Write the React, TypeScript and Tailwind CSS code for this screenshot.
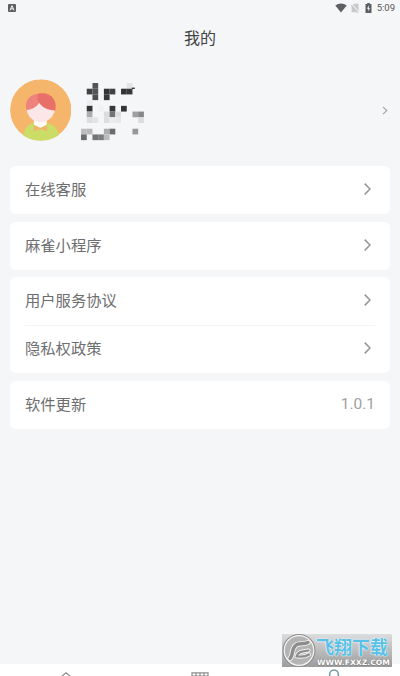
import { Fragment } from "react";

const MENU = [
  [{ label: "在线客服" }],
  [{ label: "麻雀小程序" }],
  [{ label: "用户服务协议" }, { label: "隐私权政策" }],
  [{ label: "软件更新", value: "1.0.1" }],
];

// column, row, colour of each block that hides the user name
const BLOCKS: [number, number, string][] = [
  [2, 0, "#555557"], [8, 0, "#e4e4e6"],
  [1, 1, "#424244"], [2, 1, "#555557"], [4, 1, "#343436"], [5, 1, "#424244"], [7, 1, "#343436"], [8, 1, "#38383a"],
  [2, 2, "#4e4e50"], [4, 2, "#38383a"],
  [1, 3, "#ededef"],
  [1, 4, "#343436"], [3, 4, "#f1f1f3"], [5, 4, "#38383a"], [7, 4, "#343436"],
  [1, 5, "#adadaf"], [4, 5, "#dcdcde"], [5, 5, "#747476"], [6, 5, "#dededf"], [9, 5, "#a0a0a2"], [10, 5, "#878789"],
  [1, 6, "#dededf"], [2, 6, "#e4e4e6"], [4, 6, "#dededf"], [5, 6, "#ececee"], [6, 6, "#e8e8ea"], [10, 6, "#dcdcde"],
  [0, 8, "#bcbcbe"], [1, 8, "#b8b8ba"], [4, 8, "#adadaf"], [5, 8, "#6c6c6e"], [9, 8, "#98989a"],
  [0, 9, "#6c6c6e"], [2, 9, "#747476"], [3, 9, "#7c7c7e"], [4, 9, "#bcbcbe"],
];

const StatusBar = () => (
  <div className="flex h-4 items-center pl-2 pr-[5px]">
    <svg width="8" height="8" viewBox="0 0 8 8">
      <rect width="8" height="8" rx="1" fill="#5d5f62" />
      <path d="M2 6.4 4 1.6 6 6.4M2.8 4.8h2.4" fill="none" stroke="#f5f6f8" strokeWidth="1" />
    </svg>
    <svg className="ml-auto" width="12" height="10" viewBox="0 0 12 10">
      <path d="M0.3 2.6C3.6 -0.3 8.4 -0.3 11.7 2.6L6 9.6Z" fill="#5d5f62" />
    </svg>
    <svg className="ml-1" width="8" height="10" viewBox="0 0 8 10">
      <path d="M3 0.7h4.6v8.6H0.6V3.2Z" fill="#c9cacc" />
      <path d="M0.3 1.3 7.4 9.3" stroke="#f5f6f8" strokeWidth="1.6" />
      <path d="M0.2 1.9 6.9 9.6" stroke="#a9abad" strokeWidth="0.8" />
    </svg>
    <svg className="ml-1.5" width="7" height="10" viewBox="0 0 7 10">
      <path d="M2.2 0h2.6v1H6.5v9h-6V1h1.7Z" fill="#5d5f62" />
      <path d="M3.9 2.2 2 5.8h1.3v2.5L5 5H3.8Z" fill="#f5f6f8" />
    </svg>
    <span className="ml-[5px] font-['Roboto',sans-serif] text-[9.5px] leading-4 text-[#55575a]">5:09</span>
  </div>
);

const Avatar = () => (
  <svg width="61.5" height="62" viewBox="0 0 62 62">
    <defs>
      <clipPath id="face">
        <circle cx="31" cy="31" r="31" />
      </clipPath>
    </defs>
    <g clipPath="url(#face)">
      <circle cx="31" cy="31" r="31" fill="#f5b56b" />
      <path d="M12 62C14 49 18 44.5 25 44h11c8 0.5 13 5 15 18Z" fill="#cbdc67" />
      <path d="M24 41h13v4.5l-6.5 4-6.5-4Z" fill="#fffaf8" />
      <circle cx="31" cy="29" r="14.3" fill="#fbe6e8" />
      <path d="M16.6 31C14 22 20 14.5 30 14.5c4 4 3 8 0 9C27 27 23 31 16.6 31Z" fill="#ee827c" />
      <path d="M28 14.7C41 12 48 21 45.6 31.5 38 31.5 31 28.5 28 21Z" fill="#e96f69" />
      <path d="M24 46.5l6.7 2.3 6.8-2.3v6l-6.8-2-6.7 2Z" fill="#efb66b" />
    </g>
  </svg>
);

const Mosaic = () => (
  <svg className="ml-[10px]" width="63.5" height="58" viewBox="0 0 11.1 10.15">
    {BLOCKS.map(([x, y, fill]) => (
      <rect key={`${x}-${y}`} x={x} y={y} width="1" height="1" fill={fill} />
    ))}
    <rect x="8.9" y="0.8" width="0.5" height="0.25" fill="#343436" />
  </svg>
);

const Chevron = () => (
  <svg className="-mt-0.5 mr-1" width="7" height="12" viewBox="0 0 7 12">
    <path d="M0.7 0.6 6 6 0.7 11.4" fill="none" stroke="#969696" strokeWidth="1.5" />
  </svg>
);

const Watermark = () => (
  <div className="absolute left-[282px] top-[634px] h-[33px] w-[110px] bg-linear-to-b from-[#dcddde] to-[#9c9c9d]">
    <svg className="absolute left-0 top-0" width="34" height="33" viewBox="0 0 34 33">
      <circle cx="17" cy="16.5" r="15.6" fill="#b4b4b5" stroke="#8d8d8e" strokeWidth="1.8" />
      <circle cx="17" cy="16.5" r="14.8" fill="none" stroke="#f7f7f7" strokeWidth="1.2" />
      <g fill="none" strokeLinecap="round">
        <path d="M8 24.500c3.500-3 1-9 5.500-13 3-3 7-.5 12.500-3" stroke="#f2f2f2" strokeWidth="5.200" />
        <path d="M8 24.500c3.500-3 1-9 5.500-13 3-3 7-.5 12.500-3" stroke="#8c8c8d" strokeWidth="3.400" />
        <path d="M14.500 22.500c1.500-5 5-5 12-6M16 22.500c5 0.500 8 0 11-2" stroke="#f2f2f2" strokeWidth="4" />
        <path d="M14.500 22.500c1.500-5 5-5 12-6M16 22.500c5 0.500 8 0 11-2" stroke="#8c8c8d" strokeWidth="2.200" />
      </g>
    </svg>
    <div className="ml-[34px] flex h-full flex-col">
      <span className="mt-[3px] h-[20px] whitespace-nowrap font-['Noto_Sans_CJK_SC',sans-serif] text-[18px] font-bold leading-[19px] text-[#58c1e8] [text-shadow:0_0_1px_#fff,0_0_2px_#fff]">
        飞翔下载
      </span>
      <svg width="76" height="10">
        <text
          x="1"
          y="8"
          textLength="73"
          lengthAdjust="spacingAndGlyphs"
          fill="#fff"
          stroke="#777"
          strokeWidth="0.8"
          paintOrder="stroke"
          className="font-['DejaVu_Sans',sans-serif] text-[7.5px] font-bold"
        >
          WWW.FXXZ.COM
        </text>
      </svg>
    </div>
  </div>
);

const TabBar = () => (
  <nav className="mt-auto flex h-3 justify-around overflow-hidden bg-white pt-2">
    <svg width="16" height="16" viewBox="0 0 16 16" fill="none" stroke="#8e8e90" strokeWidth="1.2">
      <path d="M1 6.5 8 0.8 15 6.5M3 5v10h10V5" />
    </svg>
    <svg width="18" height="16" viewBox="0 0 18 16" fill="none" stroke="#8e8e90" strokeWidth="1.2">
      <path d="M1 0.8h16V15H1ZM1 4h16M5 0.8V4M9 0.8V4M13 0.8V4" />
    </svg>
    <svg className="-mt-2 h-[22px] shrink-0" width="16" height="22" viewBox="0 0 16 22" fill="none" stroke="#71979f" strokeWidth="1.5">
      <circle cx="8" cy="10.5" r="4.4" />
    </svg>
  </nav>
);

const App = () => {
  return (
    <div className="relative flex h-[676px] w-[400px] flex-col overflow-hidden bg-[#f5f6f8] font-['Noto_Sans_CJK_SC',sans-serif]">
      <StatusBar />
      <h1 className="h-[44px] text-center text-[16px] leading-[43px] text-[#414244]">我的</h1>
      <section className="flex h-[106px] items-start pl-[9.5px] pr-3 pt-[19px]">
        <Avatar />
        <div className="pt-[4px]">
          <Mosaic />
        </div>
        <svg className="ml-auto mt-[27px]" width="6" height="9" viewBox="0 0 6 9">
          <path d="M1 0.8 4.8 4.5 1 8.2" fill="none" stroke="#a2a3a5" strokeWidth="1.1" />
        </svg>
      </section>
      <main className="flex flex-col gap-[7.5px] px-[10px]">
        {MENU.map((rows) => (
          <section key={rows[0].label} className="rounded-md bg-white px-[15px]">
            {rows.map((row, i) => (
              <Fragment key={row.label}>
                {i > 0 && <div className="-mb-px h-px bg-[#f4f4f5]" />}
                <div className="flex h-12 items-center justify-between text-[15.3px] leading-none text-[#6e6e6f]">
                  <span className="-mt-0.5">{row.label}</span>
                  {"value" in row ? (
                    <span className="font-['Roboto',sans-serif] text-[15.5px] text-[#a0a0a0]">
                      {row.value}
                    </span>
                  ) : (
                    <Chevron />
                  )}
                </div>
              </Fragment>
            ))}
          </section>
        ))}
      </main>
      <TabBar />
      <Watermark />
    </div>
  );
};

export default App;
